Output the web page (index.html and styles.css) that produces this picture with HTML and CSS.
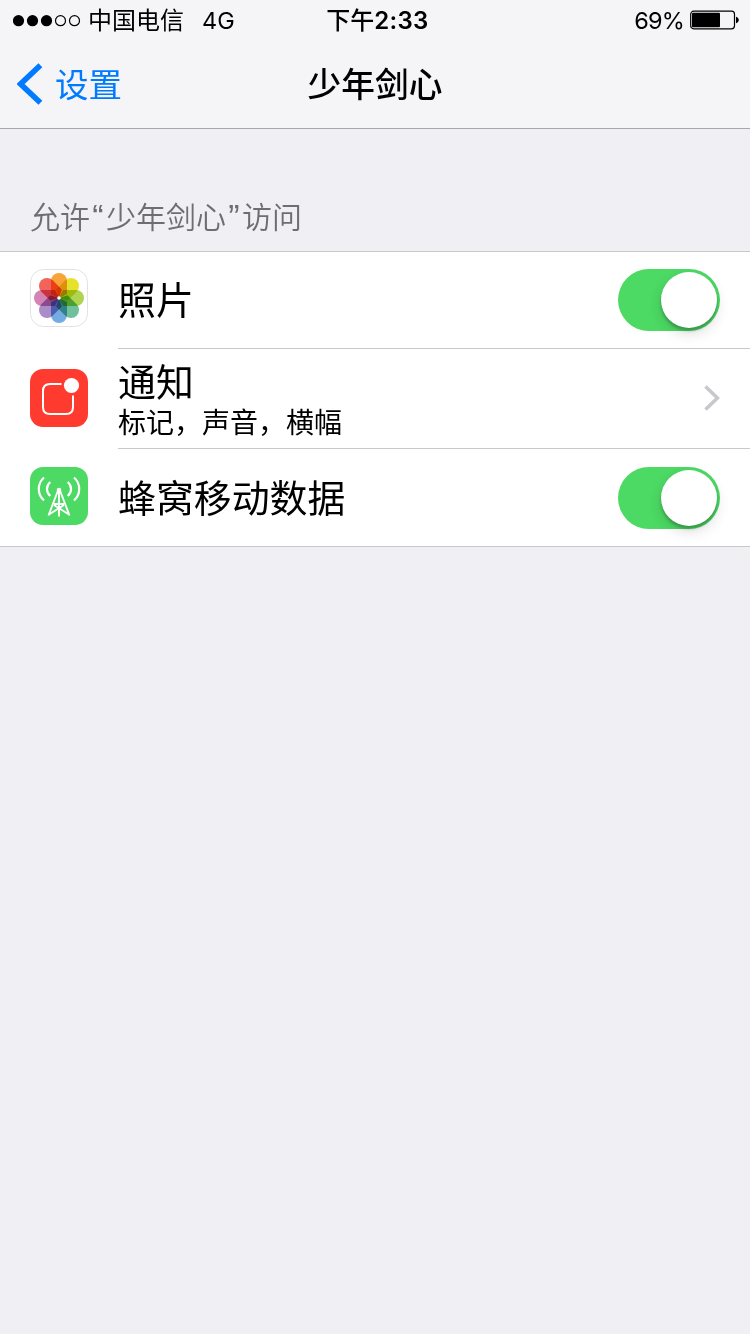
FILE: index.html
```html
<!DOCTYPE html>
<html lang="zh-CN">
<head>
<meta charset="utf-8">
<title>少年剑心</title>
<link rel="stylesheet" href="styles.css">
</head>
<body>
<header class="top">
  <div class="status">
    <div class="status-left">
      <svg class="signal" width="68" height="12" viewBox="0 0 68 12">
        <circle cx="5.5" cy="5.700" r="5.6"/><circle cx="19.5" cy="5.700" r="5.6"/><circle cx="33.5" cy="5.700" r="5.6"/>
        <circle class="hollow" cx="47.5" cy="5.700" r="5"/><circle class="hollow" cx="61.5" cy="5.700" r="5"/>
      </svg>
      <span class="carrier">中国电信</span>
      <span class="network">4G</span>
    </div>
    <div class="clock"><span class="period">下午</span>2:33</div>
    <div class="status-right">
      <span class="percent">69%</span>
      <svg class="battery" width="49" height="20" viewBox="0 0 49 20">
        <rect class="hollow" x=".7" y="1.2" width="43.8" height="17.6" rx="3"/>
        <rect x="2" y="2.7" width="28" height="14.6" rx="1"/>
        <path d="M46 6.8c1.6.4 2.8 1.700 2.800 3.200s-1.200 2.800-2.800 3.200z"/>
      </svg>
    </div>
  </div>
  <nav class="navbar">
    <a class="back">
      <svg width="26" height="42" viewBox="0 0 26 42"><path d="M23.400 2.200 3.600 21l19.800 18.800"/></svg>
      <span>设置</span>
    </a>
    <h1 class="title">少年剑心</h1>
  </nav>
</header>
<main>
  <h2 class="section-title">允许<span class="quote">“</span>少年剑心<span class="quote">”</span>访问</h2>
  <ul class="list">
    <li class="row row-first">
      <svg class="icon" width="58" height="58" viewBox="0 0 58 58">
        <defs><path id="petal" d="M0-25a8 8 0 0 1 8 8V-4L0 0-8-4V-17A8 8 0 0 1 0-25z"/></defs>
        <rect x=".5" y=".5" width="57" height="57" rx="13" fill="#fff" stroke="#e2e2e5"/>
        <g class="petals" transform="translate(29 29)">
          <use href="#petal" fill="#f8a23a"/>
          <use href="#petal" fill="#e6e22b" transform="rotate(45)"/>
          <use href="#petal" fill="#b0d450" transform="rotate(90)"/>
          <use href="#petal" fill="#6fc09b" transform="rotate(135)"/>
          <use href="#petal" fill="#74abe0" transform="rotate(180)"/>
          <use href="#petal" fill="#a98cc8" transform="rotate(225)"/>
          <use href="#petal" fill="#d484b4" transform="rotate(270)"/>
          <use href="#petal" fill="#f2645a" transform="rotate(315)"/>
        </g>
        <circle cx="29" cy="29" r="1.800" fill="#fff"/>
      </svg>
      <div class="body">
        <span class="label">照片</span>
        <span class="switch"><span class="knob"></span></span>
      </div>
    </li>
    <li class="row row-tall">
      <svg class="icon" width="58" height="58" viewBox="0 0 58 58">
        <rect width="58" height="58" rx="13" fill="#ff3b30"/>
        <path d="M31.500 15H20q-7 0-7 7v16q0 7 7 7h16q7 0 7-7V26.500" fill="none" stroke="#fff" stroke-width="2"/>
        <circle cx="41.500" cy="16.500" r="7.600" fill="#fff"/>
      </svg>
      <div class="body">
        <div class="stack">
          <span class="label">通知</span>
          <span class="detail">标记，声音，横幅</span>
        </div>
        <svg class="chevron" width="18" height="28" viewBox="0 0 18 28"><path d="M3.500 1.500 15.500 13l-12 11.500"/></svg>
      </div>
    </li>
    <li class="row row-last">
      <svg class="icon" width="58" height="58" viewBox="0 0 58 58">
        <rect width="58" height="58" rx="13" fill="#4cd964"/>
        <g fill="none" stroke="#fff" stroke-width="2.200">
          <path d="M14 10.500a15.300 15.300 0 0 0 0 23M44 10.500a15.300 15.300 0 0 1 0 23M20.300 15a9 9 0 0 0 0 14M37.700 15a9 9 0 0 1 0 14"/>
          <path d="M28.200 23 18.500 48.500M29.800 23l9.700 25.500M29 22v27.500M24 37h10M19 47.500 34 38M39 47.500 24 38" stroke-width="1.900"/>
        </g>
        <circle cx="29" cy="23" r="2.300" fill="#fff"/>
      </svg>
      <div class="body">
        <span class="label">蜂窝移动数据</span>
        <span class="switch"><span class="knob"></span></span>
      </div>
    </li>
  </ul>
</main>
</body>
</html>
```
FILE: styles.css
```css
* { box-sizing: border-box; }
body {
  margin: 0;
  min-height: 1334px;
  background: #efeff4;
  color: #000;
  font-family: Inter, "Noto Sans CJK SC", sans-serif;
}
.top {
  height: 129px;
  background: #f5f5f8;
  border-bottom: 1px solid #a7a7ac;
}
.status {
  display: grid;
  grid-template-columns: 1fr auto 1fr;
  align-items: center;
  height: 41px;
  padding: 0 11px 0 13px;
  font-size: 24px;
  line-height: 41px;
}
.status-left, .status-right { display: flex; align-items: center; }
.status-right { justify-content: flex-end; gap: 6px; }
.hollow { fill: none; stroke: #000; stroke-width: 1.2; }
.carrier { margin-left: 7px; }
.network { margin-left: 18px; font-size: 23.500px; }
.percent { letter-spacing: -.8px; font-size: 23.500px; }
.battery { margin-bottom: 1px; }
.clock { font-weight: 600; padding-left: 3px; letter-spacing: .3px; }
.period { font-weight: 450; letter-spacing: 0; }
.navbar {
  display: grid;
  grid-template-columns: 1fr auto 1fr;
  align-items: center;
  height: 88px;
  padding: 0 16px;
}
.back { display: flex; align-items: center; gap: 12px; color: #007aff; font-size: 33.500px; line-height: 48px; }
.back svg { margin: 0 0 2px 1px; }
.back path { fill: none; stroke: #007aff; stroke-width: 5.600; }
.title { margin: 0; font-size: 33.700px; line-height: 48px; font-weight: 500; }
.section-title {
  margin: 0;
  padding: 66px 30px 11px;
  height: 122px;
  color: #6d6d72;
  font-size: 30px;
  line-height: 45px;
  font-weight: 350;
}
.quote {
  display: inline-block;
  width: 16px;
  text-align: center;
  font-family: "Liberation Sans", sans-serif;
  font-size: 34px;
  font-weight: 400;
  line-height: 1;
}
.list {
  margin: 0;
  padding: 0;
  list-style: none;
  background: #fff;
  border: solid #c8c7cc;
  border-width: 1px 0;
}
.row { display: flex; align-items: center; height: 97px; padding-left: 30px; }
.row-tall { height: 100px; }
.icon { margin: -3px 30px 0 0; flex: none; }
.row-first .icon { margin-top: -5px; }
.row-tall .icon { margin-top: -2px; }
.body {
  display: flex;
  flex: 1;
  align-items: center;
  justify-content: space-between;
  height: 100%;
  padding-right: 30px;
  border-bottom: 1px solid #c8c7cc;
}
.row-last .body { border: 0; }
.label { font-size: 37.900px; line-height: 44px; }
.stack { display: flex; flex-direction: column; padding-top: 4px; }
.detail { font-size: 28px; line-height: 38px; }
.chevron path { fill: none; stroke: #c7c7cc; stroke-width: 3.600; }
.switch {
  display: flex;
  justify-content: flex-end;
  width: 102px;
  height: 62px;
  padding: 3px;
  border-radius: 31px;
  background: #4cd964;
}
.knob {
  width: 56px;
  height: 56px;
  border-radius: 50%;
  background: #fff;
  box-shadow: 0 3px 3px rgba(0, 0, 0, .22), 0 6px 14px rgba(0, 0, 0, .13);
}
.petals use { mix-blend-mode: multiply; }
```
